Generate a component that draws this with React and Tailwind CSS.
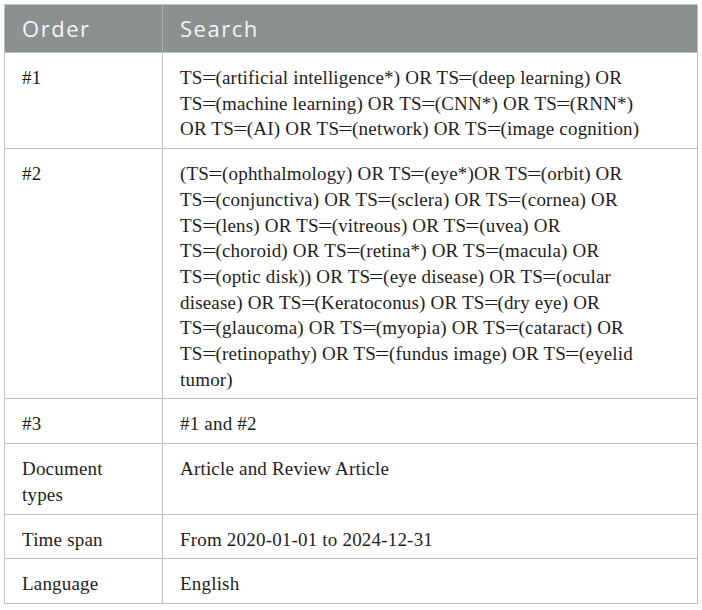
const rows = [
  {
    order: ["#1"],
    search: [
      "TS=(artificial intelligence*) OR TS=(deep learning) OR",
      "TS=(machine learning) OR TS=(CNN*) OR TS=(RNN*)",
      "OR TS=(AI) OR TS=(network) OR TS=(image cognition)",
    ],
  },
  {
    order: ["#2"],
    search: [
      "(TS=(ophthalmology) OR TS=(eye*)OR TS=(orbit) OR",
      "TS=(conjunctiva) OR TS=(sclera) OR TS=(cornea) OR",
      "TS=(lens) OR TS=(vitreous) OR TS=(uvea) OR",
      "TS=(choroid) OR TS=(retina*) OR TS=(macula) OR",
      "TS=(optic disk)) OR TS=(eye disease) OR TS=(ocular",
      "disease) OR TS=(Keratoconus) OR TS=(dry eye) OR",
      "TS=(glaucoma) OR TS=(myopia) OR TS=(cataract) OR",
      "TS=(retinopathy) OR TS=(fundus image) OR TS=(eyelid",
      "tumor)",
    ],
  },
  { order: ["#3"], search: ["#1 and #2"] },
  { order: ["Document", "types"], search: ["Article and Review Article"] },
  { order: ["Time span"], search: ["From 2020-01-01 to 2024-12-31"] },
  { order: ["Language"], search: ["English"] },
];

// the "=" in the source is set in a wider symbol face
function Line({ text }) {
  const parts = text.split("=");
  return (
    <div className="whitespace-nowrap">
      {parts.map((p, i) => (
        <span key={i}>
          {p}
          {i < parts.length - 1 && (
            <span className="mx-[1px] inline-block scale-x-[1.35]">=</span>
          )}
        </span>
      ))}
    </div>
  );
}

export default function App() {
  return (
    <div className="w-[702px] h-[610px] bg-white p-1">
      <table className="w-[694px] table-fixed border-collapse border border-[#bcc2c0]">
        <colgroup>
          <col className="w-[158px]" />
          <col />
        </colgroup>
        <thead>
          <tr className="bg-[#8b9191]">
            <th className="border-r border-[#a9aeae] px-[17px] py-[9px] text-left font-normal text-[22px] leading-[29px] tracking-[0.07em] text-[#f4f5f5] font-['Open_Sans',sans-serif]">
              Order
            </th>
            <th className="px-[17px] py-[9px] text-left font-normal text-[22px] leading-[29px] tracking-[0.07em] text-[#f4f5f5] font-['Open_Sans',sans-serif]">
              Search
            </th>
          </tr>
        </thead>
        <tbody className="font-['Liberation_Serif',serif] text-[19px] leading-[25.7px] tracking-[0.01em] text-[#1e1e1e]">
          {rows.map((r) => (
            <tr key={r.order.join(" ")} className="border-t border-[#bcc2c0]">
              <td className="border-r border-[#bcc2c0] px-[17px] pt-[12px] pb-[6px] align-top">
                {r.order.map((t) => (
                  <div key={t}>{t}</div>
                ))}
              </td>
              <td className="px-[17px] pt-[12px] pb-[6px] align-top">
                {r.search.map((t) => (
                  <Line key={t} text={t} />
                ))}
              </td>
            </tr>
          ))}
        </tbody>
      </table>
    </div>
  );
}
